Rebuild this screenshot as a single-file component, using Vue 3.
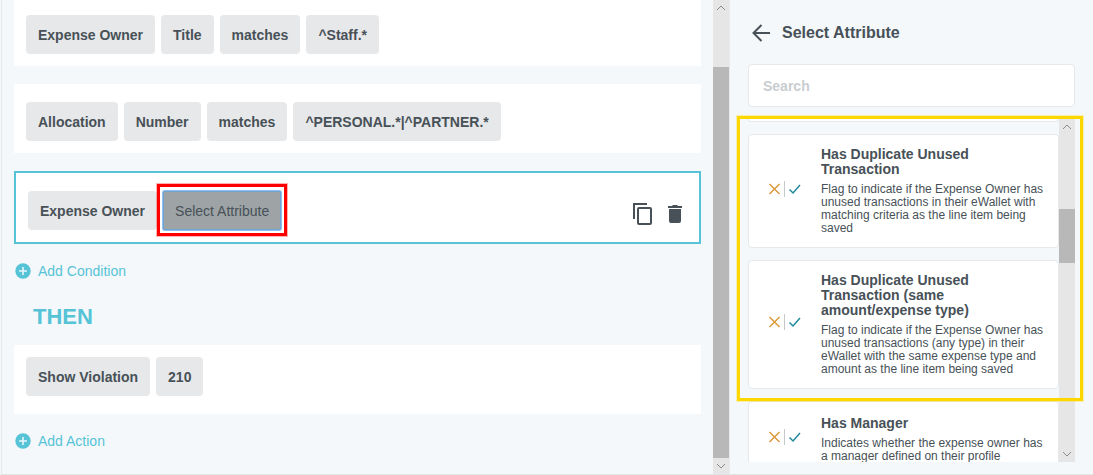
<script setup>
import { ref } from 'vue'

const search = ref('')
const conditions = [
  ['Expense Owner', 'Title', 'matches', '^Staff.*'],
  ['Allocation', 'Number', 'matches', '^PERSONAL.*|^PARTNER.*'],
]
const actions = ['Show Violation', '210']
const attributes = [
  {
    name: 'Has Duplicate Unused Transaction',
    text: 'Flag to indicate if the Expense Owner has unused transactions in their eWallet with matching criteria as the line item being saved',
  },
  {
    name: 'Has Duplicate Unused Transaction (same amount/expense type)',
    text: 'Flag to indicate if the Expense Owner has unused transactions (any type) in their eWallet with the same expense type and amount as the line item being saved',
  },
  {
    name: 'Has Manager',
    text: 'Indicates whether the expense owner has a manager defined on their profile',
  },
]
</script>

<template>
  <div class="app">
    <main class="rules">
      <section v-for="(row, i) in conditions" :key="i" class="row">
        <button v-for="chip in row" :key="chip" type="button" class="chip">{{ chip }}</button>
      </section>

      <section class="row active">
        <button type="button" class="chip">Expense Owner</button>
        <div class="marked">
          <button type="button" class="chip pending">Select Attribute</button>
        </div>
        <div class="tools">
          <button type="button" class="tool" aria-label="Copy">
            <svg width="24" height="24" viewBox="0 0 24 24">
              <path d="M3 17V2h13" fill="none" stroke="currentColor" stroke-width="2" />
              <rect x="7" y="6" width="13" height="16" rx="1" fill="none" stroke="currentColor" stroke-width="2" />
            </svg>
          </button>
          <button type="button" class="tool" aria-label="Delete">
            <svg width="24" height="24" viewBox="0 0 24 24">
              <path d="M6 7h12v12q0 2-2 2H8q-2 0-2-2zM5 4h4l1-1h4l1 1h4v2H5z" fill="currentColor" />
            </svg>
          </button>
        </div>
      </section>

      <button type="button" class="add">
        <svg width="16" height="16" viewBox="0 0 16 16">
          <circle cx="8" cy="8" r="7.7" fill="#56c3d6" />
          <path d="M8 4v8M4 8h8" stroke="#e9f6fa" stroke-width="1.6" />
        </svg>
        Add Condition
      </button>

      <h2 class="then">THEN</h2>

      <section class="row result">
        <button v-for="chip in actions" :key="chip" type="button" class="chip">{{ chip }}</button>
      </section>
      <button type="button" class="add">
        <svg width="16" height="16" viewBox="0 0 16 16">
          <circle cx="8" cy="8" r="7.7" fill="#56c3d6" />
          <path d="M8 4v8M4 8h8" stroke="#e9f6fa" stroke-width="1.6" />
        </svg>
        Add Action
      </button>
    </main>

    <div class="scroll scroll-main" aria-hidden="true">
      <svg class="arrow" viewBox="0 0 16 16"><path d="M4 10l4-4 4 4" /></svg>
      <div class="before"></div>
      <div class="thumb"></div>
      <svg class="arrow" viewBox="0 0 16 16"><path d="M4 6l4 4 4-4" /></svg>
    </div>

    <aside class="panel">
      <header class="head">
        <button type="button" class="back" aria-label="Back">
          <svg width="20" height="20" viewBox="0 0 20 20">
            <path d="M19 10H3M10.500 2L2.500 10l8 8" fill="none" stroke="currentColor" stroke-width="2" />
          </svg>
        </button>
        <h1>Select Attribute</h1>
      </header>
      <input v-model="search" class="search" type="text" placeholder="Search" aria-label="Search" />

      <div class="list-wrap">
        <div class="list">
          <div class="previous"></div>
          <button v-for="a in attributes" :key="a.name" type="button" class="item">
            <svg class="flags" width="34" height="16" viewBox="0 0 34 16">
              <path d="M1.500 3l10 10M11.500 3l-10 10" fill="none" stroke="#dc9a3c" stroke-width="1.500" />
              <path d="M16.500 0v16" stroke="#c6c9cb" />
              <path d="M21.500 8.500l3.500 3.500L32 4" fill="none" stroke="#1f8a9c" stroke-width="1.500" />
            </svg>
            <span class="body">
              <span class="name">{{ a.name }}</span>
              <span class="text">{{ a.text }}</span>
            </span>
          </button>
        </div>
        <div class="scroll scroll-list" aria-hidden="true">
          <svg class="arrow" viewBox="0 0 16 16"><path d="M4 10l4-4 4 4" /></svg>
          <div class="before"></div>
          <div class="thumb"></div>
          <div class="after"></div>
          <svg class="arrow" viewBox="0 0 16 16"><path d="M4 6l4 4 4-4" /></svg>
        </div>
        <div class="highlight"></div>
      </div>
    </aside>
  </div>
</template>

<style>
body {
  background: #f4f8fb;
}
</style>

<style scoped>
.app {
  box-sizing: border-box;
  display: flex;
  height: 100vh;
  overflow: hidden;
  border-left: 1px solid #e6e8ea;
  border-bottom: 1px solid #e2e6e9;
  margin-left: 1px;
  background: #f4f8fb;
  color: #475157;
  font: 14px/16px "Liberation Sans", Arial, sans-serif;
}
button {
  border: 0;
  padding: 0;
  background: none;
  color: inherit;
  font: inherit;
  cursor: pointer;
}
svg {
  display: block;
}
.rules {
  flex: 1;
  min-width: 0;
  overflow: hidden;
  padding: 0 12px;
}
.row {
  display: flex;
  gap: 6px;
  padding: 18px 12px 12px;
  margin-bottom: 18px;
  background: #fff;
}
.row:first-child {
  margin-top: -3px;
}
.row.active {
  border: 2px solid #56c3d6;
  margin-bottom: 19px;
}
.row.result {
  padding: 12px 12px 18px;
  margin-bottom: 19px;
}
.chip {
  height: 39px;
  padding: 0 12px;
  border-radius: 4px;
  background: #e7e8ea;
  font-weight: bold;
  white-space: nowrap;
}
.marked {
  position: relative;
}
.marked::after {
  content: "";
  position: absolute;
  inset: -7px -6px -6px -6px;
  border: 3px solid #fe0000;
  box-shadow: 0 0 0 1px rgba(254, 0, 0, 0.3);
  pointer-events: none;
}
.pending {
  border-radius: 2px;
  background: #9ea3a6;
  box-shadow: inset 0 0 0 1px #6ea3d3, 0 0 0 1px #8fc0f0;
  font-weight: normal;
}
.tools {
  display: flex;
  align-items: center;
  gap: 8px;
  padding-top: 6px;
  margin: 0 0 0 auto;
}
.add {
  display: flex;
  align-items: center;
  gap: 7px;
  margin-left: 1px;
  color: #56c3d6;
}
.then {
  margin: 26px 0 16px 19px;
  color: #56c3d6;
  font-size: 22px;
  line-height: 24px;
}
.scroll {
  display: flex;
  flex: none;
  flex-direction: column;
  width: 16px;
  background: #e6e6e6;
}
.arrow {
  flex: none;
  width: 16px;
  height: 16px;
  fill: none;
  stroke: #8b8b8b;
  stroke-width: 1;
}
.thumb {
  background: #b8b8b8;
}
.scroll-main .before {
  flex: 51;
}
.scroll-main .thumb {
  flex: 391;
}
.scroll-list .before {
  flex: 74;
}
.scroll-list .thumb {
  flex: 54;
}
.scroll-list .after {
  flex: 183;
}
.panel {
  box-sizing: border-box;
  display: flex;
  flex: none;
  flex-direction: column;
  width: 364px;
  padding: 21px 18px 12px;
  border-left: 1px solid #e8eaec;
}
.head {
  display: flex;
  align-items: center;
  gap: 11px;
  height: 24px;
  margin: 0 0 19px 3px;
}
h1 {
  margin: 0;
  font-size: 16px;
  line-height: 24px;
}
.search {
  box-sizing: border-box;
  flex: none;
  width: 100%;
  height: 43px;
  padding: 0 14px;
  border: 1px solid #e6e8ea;
  border-radius: 4px;
  outline: 0;
  background: #fff;
  color: #475157;
  font: bold 14px/16px "Liberation Sans", Arial, sans-serif;
}
.search::placeholder {
  color: #c9cdd0;
  opacity: 1;
}
.list-wrap {
  position: relative;
  display: flex;
  flex: 1;
  min-height: 0;
  margin-top: 12px;
}
.list {
  display: flex;
  flex: 1;
  flex-direction: column;
  gap: 12px;
  min-width: 0;
  overflow: hidden;
}
.previous {
  box-sizing: border-box;
  flex: none;
  height: 3px;
  border: 1px solid #e6e8ea;
  border-top: 0;
  border-radius: 0 0 4px 4px;
  background: #fff;
}
.item {
  box-sizing: border-box;
  display: flex;
  flex: none;
  align-items: center;
  gap: 19px;
  min-height: 76px;
  padding: 12px 12px 12px 19px;
  border: 1px solid #e6e8ea;
  border-radius: 4px;
  background: #fff;
  text-align: left;
}
.flags {
  flex: none;
  margin-bottom: 5px;
}
.body {
  flex: 1;
}
.name {
  display: block;
  margin-bottom: 6px;
  font-weight: bold;
  line-height: 15px;
}
.text {
  display: block;
  font-size: 12px;
  line-height: 13px;
}
.highlight {
  position: absolute;
  top: -3px;
  right: -8px;
  left: -11px;
  height: 285px;
  box-sizing: border-box;
  border: 3px solid #ffd700;
  box-shadow: 0 0 0 1px rgba(255, 215, 0, 0.3);
  pointer-events: none;
}
</style>
